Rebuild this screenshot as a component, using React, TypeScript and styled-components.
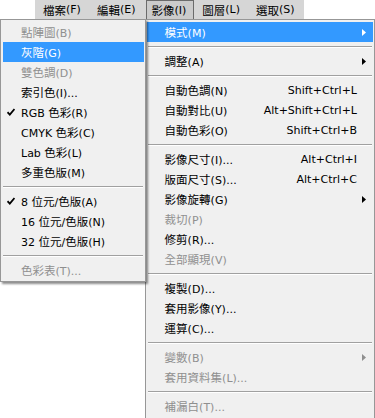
import { FC, ReactNode } from "react";
import styled, { createGlobalStyle } from "styled-components";

const GlobalStyle = createGlobalStyle`
    body {
        margin: 0;
        background: #ffffff;
        overflow: hidden;
    }
`;

const Page = styled.div`
    position: relative;
    width: 375px;
    height: 418px;
    overflow: hidden;
    font-family: "DejaVu Sans", "Noto Sans CJK TC", sans-serif;
    font-size: 11px;
    color: #000;
`;

const MenuBar = styled.div`
    margin-left: 35px;
    width: 269px;
    height: 19px;
    background: #d6d6d6;
    display: flex;
`;

const BarItem = styled.div<{ $pressed?: boolean }>`
    display: flex;
    align-items: center;
    padding: ${(p) => (p.$pressed ? "0 7px 0 4px" : "0 8px")};
    margin-left: ${(p) => (p.$pressed ? "3px" : "0")};
    border: ${(p) => (p.$pressed ? "1px solid #6b6b6b" : "none")};
    border-bottom: none;
    background: ${(p) => (p.$pressed ? "#cbcbcb" : "transparent")};
    white-space: nowrap;
`;

const Menus = styled.div`
    display: flex;
    align-items: flex-start;
`;

const SubMenu = styled.div`
    position: relative;
    z-index: 2;
    box-sizing: border-box;
    width: 146px;
    padding: 2px 1px 1px 2px;
    background: #f0f0f0;
    border: 1px solid #979797;
    box-shadow: 2px 2px 2px rgba(0, 0, 0, 0.45);
`;

const MainMenu = styled.div`
    box-sizing: border-box;
    width: 231px;
    margin-left: -1px;
    padding: 2px 1px;
    background: #f0f0f0;
    border: 1px solid #979797;
`;

const Row = styled.div<{ $active?: boolean; $disabled?: boolean }>`
    display: flex;
    align-items: center;
    height: 20px;
    padding-right: 7px;
    white-space: nowrap;
    background: ${(p) => (p.$active ? "#3399ff" : "transparent")};
    color: ${(p) => (p.$active ? "#ffffff" : p.$disabled ? "#8f8f8f" : "#000000")};
`;

const CheckCell = styled.div`
    width: 18px;
    flex: none;
    display: flex;
    align-items: center;
    padding-left: 4px;
    box-sizing: border-box;
`;

const Shortcut = styled.span`
    margin-left: auto;
    margin-right: 9px;
`;

const Arrow = styled.svg`
    margin-left: auto;
    flex: none;
`;

const Separator = styled.div`
    margin: 4px 1px 3px 0;
    border-top: 1px solid #a0a0a0;
    border-bottom: 1px solid #ffffff;
`;

const MainSeparator = styled(Separator)`
    margin-left: 1px;
`;

const Cjk = styled.span`
    font-family: "Noto Sans CJK TC", sans-serif;
    font-size: 11.5px;
`;

const Cursor = styled.svg`
    position: absolute;
    left: 97px;
    top: 53px;
`;

// CJK runs get their own font, latin stays in DejaVu
const label = (text: string): ReactNode =>
    text.split(/([\u3000-\u9fff\uff00-\uffef]+)/).map((part, i) =>
        i % 2 ? <Cjk key={i}>{part}</Cjk> : part
    );

type Item = {
    text?: string;
    sep?: boolean;
    active?: boolean;
    disabled?: boolean;
    checked?: boolean;
    shortcut?: string;
    sub?: boolean;
};

const modeItems: Item[] = [
    { text: "點陣圖(B)", disabled: true },
    { text: "灰階(G)", active: true },
    { text: "雙色調(D)", disabled: true },
    { text: "索引色(I)..." },
    { text: "RGB 色彩(R)", checked: true },
    { text: "CMYK 色彩(C)" },
    { text: "Lab 色彩(L)" },
    { text: "多重色版(M)" },
    { sep: true },
    { text: "8 位元/色版(A)", checked: true },
    { text: "16 位元/色版(N)" },
    { text: "32 位元/色版(H)" },
    { sep: true },
    { text: "色彩表(T)...", disabled: true },
];

const imageItems: Item[] = [
    { text: "模式(M)", active: true, sub: true },
    { sep: true },
    { text: "調整(A)", sub: true },
    { sep: true },
    { text: "自動色調(N)", shortcut: "Shift+Ctrl+L" },
    { text: "自動對比(U)", shortcut: "Alt+Shift+Ctrl+L" },
    { text: "自動色彩(O)", shortcut: "Shift+Ctrl+B" },
    { sep: true },
    { text: "影像尺寸(I)...", shortcut: "Alt+Ctrl+I" },
    { text: "版面尺寸(S)...", shortcut: "Alt+Ctrl+C" },
    { text: "影像旋轉(G)", sub: true },
    { text: "裁切(P)", disabled: true },
    { text: "修剪(R)..." },
    { text: "全部顯現(V)", disabled: true },
    { sep: true },
    { text: "複製(D)..." },
    { text: "套用影像(Y)..." },
    { text: "運算(C)..." },
    { sep: true },
    { text: "變數(B)", disabled: true, sub: true },
    { text: "套用資料集(L)...", disabled: true },
    { sep: true },
    { text: "補漏白(T)...", disabled: true },
];

const CheckMark: FC = () => (
    <svg width="8" height="8" viewBox="0 0 8 8">
        <path d="M0.5 4.2 L2.8 6.6 L7.5 1" fill="none" stroke="#000" strokeWidth="1.8" />
    </svg>
);

const renderRow = (item: Item, i: number, main: boolean) => {
    if (item.sep) return main ? <MainSeparator key={i} /> : <Separator key={i} />;
    const colour = item.active ? "#fff" : item.disabled ? "#8f8f8f" : "#000";
    return (
        <Row key={i} $active={item.active} $disabled={item.disabled}>
            <CheckCell>{item.checked && <CheckMark />}</CheckCell>
            <span>{label(item.text!)}</span>
            {item.shortcut && <Shortcut>{item.shortcut}</Shortcut>}
            {item.sub && (
                <Arrow width="4" height="7" viewBox="0 0 4 7">
                    <polygon points="0,0 4,3.5 0,7" fill={colour} />
                </Arrow>
            )}
        </Row>
    );
};

const App: FC = () => (
    <Page>
        <GlobalStyle />
        <MenuBar>
            <BarItem>{label("檔案(F)")}</BarItem>
            <BarItem>{label("編輯(E)")}</BarItem>
            <BarItem $pressed>{label("影像(I)")}</BarItem>
            <BarItem>{label("圖層(L)")}</BarItem>
            <BarItem>{label("選取(S)")}</BarItem>
        </MenuBar>
        <Menus>
            <SubMenu>{modeItems.map((it, i) => renderRow(it, i, false))}</SubMenu>
            <MainMenu>{imageItems.map((it, i) => renderRow(it, i, true))}</MainMenu>
        </Menus>
        <Cursor width="13" height="20" viewBox="0 0 13 20">
            <path
                d="M0.5 0.5 L0.5 16 L4.3 12.4 L7 18.5 L9.3 17.5 L6.7 11.5 L11.5 11.5 Z"
                fill="#fff"
                stroke="#222"
                strokeWidth="1"
                strokeLinejoin="round"
            />
        </Cursor>
    </Page>
);

export default App;
